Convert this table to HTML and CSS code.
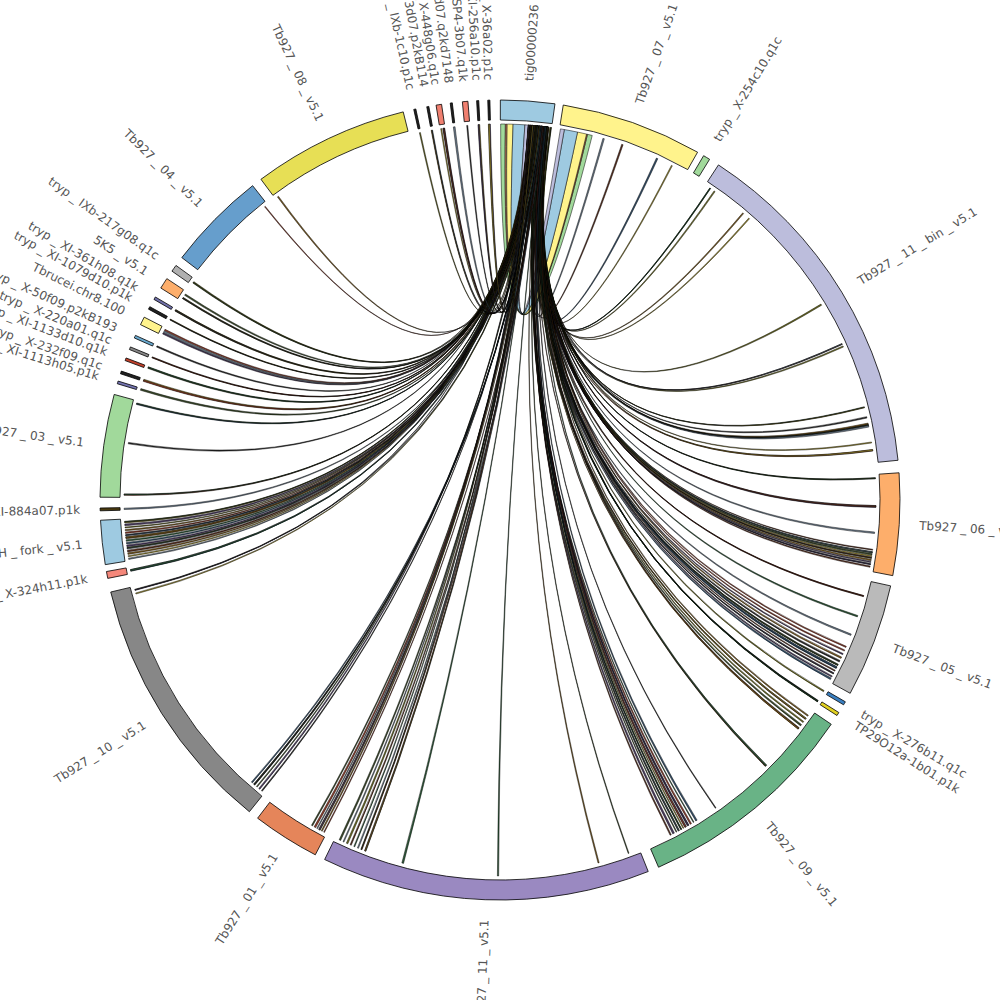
FILE: index.html
```html
<!DOCTYPE html>
<html lang="en">
<head>
<meta charset="utf-8">
<title>Circos plot</title>
<link rel="stylesheet" href="styles.css">
</head>
<body>
<svg class="circos" id="circos" viewBox="0 0 1000 1000" width="1000" height="1000">
  <g id="ribbons" class="ribbons"></g>
  <g id="ideogram" class="ideogram"></g>
  <g id="labels" class="labels">
    <text class="label" data-a="3.98">tig00000236</text>
    <text class="label" data-a="19.35">Tb927_07_v5.1</text>
    <text class="label" data-a="31.1">tryp_X-254c10.q1c</text>
    <text class="label" data-a="58.7">Tb927_11_bin_v5.1</text>
    <text class="label" data-a="93.5">Tb927_06_v5.1</text>
    <text class="label" data-a="110.65">Tb927_05_v5.1</text>
    <text class="label" data-a="120.55">tryp_X-276b11.q1c</text>
    <text class="label" data-a="122.35">TP29O12a-1b01.p1k</text>
    <text class="label" data-a="140.4">Tb927_09_v5.1</text>
    <text class="label" data-a="182.1">Tb927_11_v5.1</text>
    <text class="label" data-a="212.4">Tb927_01_v5.1</text>
    <text class="label" data-a="237.75">Tb927_10_v5.1</text>
    <text class="label" data-a="259.2">tryp_X-324h11.p1k</text>
    <text class="label" data-a="263.9">Tb927_H_fork_v5.1</text>
    <text class="label" data-a="268.65">tryp_XI-884a07.p1k</text>
    <text class="label" data-a="277.85">Tb927_03_v5.1</text>
    <text class="label" data-a="287.1">tryp_XI-1113h05.p1k</text>
    <text class="label" data-a="288.6">tryp_X-232f09.q1c</text>
    <text class="label" data-a="290.6">tryp_XI-1133d10.q1k</text>
    <text class="label" data-a="292.3">tryp_X-220a01.q1c</text>
    <text class="label" data-a="294.1">tryp_X-50f09.p2kB193</text>
    <text class="label" data-a="296.6">Tbrucei.chr8.100</text>
    <text class="label" data-a="298.7">tryp_XI-1079d10.p1k</text>
    <text class="label" data-a="300.3">tryp_XI-361h08.q1k</text>
    <text class="label" data-a="302.8">5K5_v5.1</text>
    <text class="label" data-a="305.4">tryp_IXb-217g08.q1c</text>
    <text class="label" data-a="314.55">Tb927_04_v5.1</text>
    <text class="label" data-a="334.65">Tb927_08_v5.1</text>
    <text class="label" data-a="347.7">tryp_IXb-1c10.p1c</text>
    <text class="label" data-a="349.6">tryp_X-53d07.p2kB114</text>
    <text class="label" data-a="351.2">tryp_X-448g06.q1c</text>
    <text class="label" data-a="353.0">tryp_X-8d07.q2kd7148</text>
    <text class="label" data-a="355.0">tryp_SP4-3b07.q1k</text>
    <text class="label" data-a="356.8">tryp_XI-256a10.p1c</text>
    <text class="label" data-a="358.4">tryp_X-36a02.p1c</text>
  </g>
</svg>
<script src="script.js"></script>
</body>
</html>
```

FILE: styles.css
```css
html, body {
  margin: 0;
  padding: 0;
  background: #ffffff;
}

.circos {
  display: block;
  width: 1000px;
  height: 1000px;
  background: #ffffff;
}

.seg {
  stroke: #000000;
  stroke-width: 0.8;
}

.ribbon {
  stroke: #000000;
  stroke-width: 0.45;
}

.ribbon-wide {
  stroke: #000000;
  stroke-width: 0.5;
}

.label {
  font-family: "DejaVu Sans", "Liberation Sans", sans-serif;
  font-size: 12px;
  fill: #555555;
  dominant-baseline: central;
}

.label-r {
  text-anchor: start;
}

.label-l {
  text-anchor: end;
}
```

FILE: script.js
```js
(function () {
  var NS = 'http://www.w3.org/2000/svg';
  var C = 500, RO = 400, RI = 380, RL = 376, RT = 420;

  function pt(r, a) {
    var t = a * Math.PI / 180;
    return (C + r * Math.sin(t)).toFixed(2) + ',' + (C - r * Math.cos(t)).toFixed(2);
  }
  function segPath(a, b) {
    var l = (b - a) > 180 ? 1 : 0;
    return 'M' + pt(RO, a) + ' A' + RO + ' ' + RO + ' 0 ' + l + ' 1 ' + pt(RO, b) +
      ' L' + pt(RI, b) + ' A' + RI + ' ' + RI + ' 0 ' + l + ' 0 ' + pt(RI, a) + ' Z';
  }
  function ribbonPath(s1, s2, d1, d2) {
    var a = pt(RL, s1), b = pt(RL, s2), c = pt(RL, d1), d = pt(RL, d2);
    return 'M' + a + ' A' + RL + ' ' + RL + ' 0 0 1 ' + b + ' Q' + C + ',' + C + ' ' + c +
      ' A' + RL + ' ' + RL + ' 0 0 1 ' + d + ' Q' + C + ',' + C + ' ' + a + ' Z';
  }
  function el(name, attrs, parent) {
    var e = document.createElementNS(NS, name);
    for (var k in attrs) e.setAttribute(k, attrs[k]);
    parent.appendChild(e);
    return e;
  }

  // ideogram segments: [start, end, colour]
  var segs = [
    [0.05, 7.9, '#9ecae1'],      // tig00000236
    [9.1, 29.6, '#fff38c'],      // Tb927_07
    [30.6, 31.6, '#a1d99b'],     // tryp_X-254c10
    [33.1, 84.3, '#bcbddc'],     // Tb927_11_bin
    [86.1, 100.9, '#fdae6b'],    // Tb927_06
    [102.4, 118.9, '#bababa'],   // Tb927_05
    [120.3, 120.8, '#3a7fc0'],   // tryp_X-276b11
    [122.1, 122.6, '#e0d020'],   // TP29O12a-1b01
    [124.1, 156.65, '#69b386'],  // Tb927_09
    [158.25, 206.0, '#9a89c1'],  // Tb927_11
    [207.5, 217.3, '#e5855a'],   // Tb927_01
    [218.8, 256.7, '#878787'],   // Tb927_10
    [258.7, 259.7, '#f4877a'],   // tryp_X-324h11
    [260.7, 267.1, '#9ecae1'],   // H_fork
    [268.45, 268.85, '#4a3a10'], // tryp_XI-884a07
    [270.4, 285.3, '#a1d99b'],   // Tb927_03
    [286.9, 287.3, '#7474b0'],   // 1113h05
    [288.4, 288.8, '#222222'],   // 232f09
    [290.4, 290.8, '#c0402a'],   // 1133d10
    [292.1, 292.5, '#888888'],   // 220a01
    [293.9, 294.3, '#6aaad0'],   // 50f09
    [296.0, 297.2, '#fff38c'],   // chr8
    [298.5, 298.9, '#222222'],   // 1079d10
    [300.1, 300.5, '#7070a8'],   // 361h08
    [302.0, 303.6, '#fdae6b'],   // 5K5
    [304.9, 305.9, '#b0b0b0'],   // 217g08
    [307.3, 321.8, '#669ecc'],   // Tb927_04
    [323.3, 346.0, '#e7df55'],   // Tb927_08
    [347.55, 347.85, '#222222'],
    [349.45, 349.75, '#222222'],
    [350.8, 351.6, '#f08070'],
    [352.85, 353.15, '#222222'],
    [354.6, 355.4, '#f08070'],
    [356.65, 356.95, '#222222'],
    [358.25, 358.55, '#222222']
  ];

  var ideo = document.getElementById('ideogram');
  segs.forEach(function (s) {
    el('path', { 'class': 'seg', d: segPath(s[0], s[1]), fill: s[2] }, ideo);
  });

  var rib = document.getElementById('ribbons');

  // wide ribbons between tig00000236 and Tb927_07
  var wide = [
    [0.1, 0.8, 13.45, 14.2, '#a1d99b'],
    [0.85, 1.05, 13.3, 13.45, '#e5855a'],
    [1.1, 2.0, 11.9, 13.3, '#fff38c'],
    [2.0, 3.8, 9.85, 11.9, '#9ecae1'],
    [3.8, 4.3, 9.25, 9.85, '#bcbddc']
  ];
  wide.forEach(function (w) {
    el('path', { 'class': 'ribbon-wide', d: ribbonPath(w[0], w[1], w[2], w[3]), fill: w[4] }, rib);
  });

  // thin links from tig00000236 to the rest of the genome
  var dests = [
    16, 19, 24.7, 27.2,
    34.0, 34.8, 40.3, 41.5, 58.7, 65.5, 65.9, 75.7, 77.3, 78.3, 78.5, 78.7, 81.2, 82.4,
    86.7, 91, 95, 97.6, 98.0, 98.3, 98.6, 98.9, 99.2, 99.5, 99.8, 100.2,
    104.8, 108, 111, 113, 113.6, 114.2, 114.8, 115.4, 116, 116.5, 117, 117.5, 118, 118.4,
    120.55, 122.3, 122.4,
    125, 125.6, 126.2, 126.8, 127.4, 135, 145, 148.5, 149, 149.5, 150, 150.4, 150.8, 151.2, 151.6, 152, 152.5, 153,
    160, 164.8, 180.3, 195, 201, 201.6, 202.2, 202.8, 203.4, 204, 204.6, 205.2,
    207.9, 208.3, 208.7, 209.1, 209.5, 210,
    219.3, 219.8, 220.3, 220.8, 221.3, 255.6, 256.2,
    259.2,
    261, 261.4, 261.8, 262.2, 262.6, 263, 263.4, 263.8, 264.2, 264.6, 265, 265.4, 265.8, 266.2, 266.6,
    268.65,
    270.8, 278.7, 284.8,
    287.1, 288.6, 290.6, 292.3, 294.1, 296.3, 296.6, 296.9, 298.7, 300.3, 302.5, 303.1, 305.4,
    321.3, 323.8,
    347.7, 349.6, 351.0, 351.4, 353, 355, 356.8, 358.4
  ];
  var palette = ['#8c3b2a', '#6b6b20', '#34506a', '#4a3a60', '#2f5a3a', '#7a5a20', '#2a2a2a',
    '#5a3020', '#3a4a2a', '#a09030', '#6a7a8a'];
  var seed = 12345;
  function rnd() {
    seed = (seed * 1103515245 + 12345) % 2147483648;
    return seed / 2147483648;
  }
  function addLink(d, w) {
    var s = 7.6 - ((d - 8) / 352) * 3.0 + (rnd() - 0.5) * 1.4;
    s = Math.max(4.4, Math.min(7.8, s));
    var sw = 0.05 + rnd() * 0.08;
    var col = palette[Math.floor(rnd() * palette.length)];
    el('path', { 'class': 'ribbon', d: ribbonPath(s - sw / 2, s + sw / 2, d - w / 2, d + w / 2), fill: col }, rib);
  }
  dests.forEach(function (d) {
    var w = 0.12 + rnd() * 0.16;
    addLink(d, w);
    if (rnd() < 0.3) addLink(d + (rnd() - 0.5) * 0.2, w * 0.8);
  });

  // labels: radial, with widened underscores as in the original renderer
  var labels = document.querySelectorAll('#labels .label');
  Array.prototype.forEach.call(labels, function (t) {
    var a = parseFloat(t.getAttribute('data-a'));
    var p = pt(RT, a);
    var rot, cls;
    if (a < 180) { rot = a - 90; cls = 'label-r'; } else { rot = a - 270; cls = 'label-l'; }
    var parts = t.textContent.split('_');
    if (parts.length > 1) {
      t.textContent = '';
      parts.forEach(function (part, i) {
        if (i > 0) {
          var u = el('tspan', { dx: 3.5 }, t);
          u.textContent = '_';
          var n = el('tspan', { dx: 3.5 }, t);
          n.textContent = part;
        } else {
          var f = el('tspan', {}, t);
          f.textContent = part;
        }
      });
    }
    t.setAttribute('transform', 'translate(' + p + ') rotate(' + rot.toFixed(2) + ')');
    t.classList.add(cls);
  });
})();
```
